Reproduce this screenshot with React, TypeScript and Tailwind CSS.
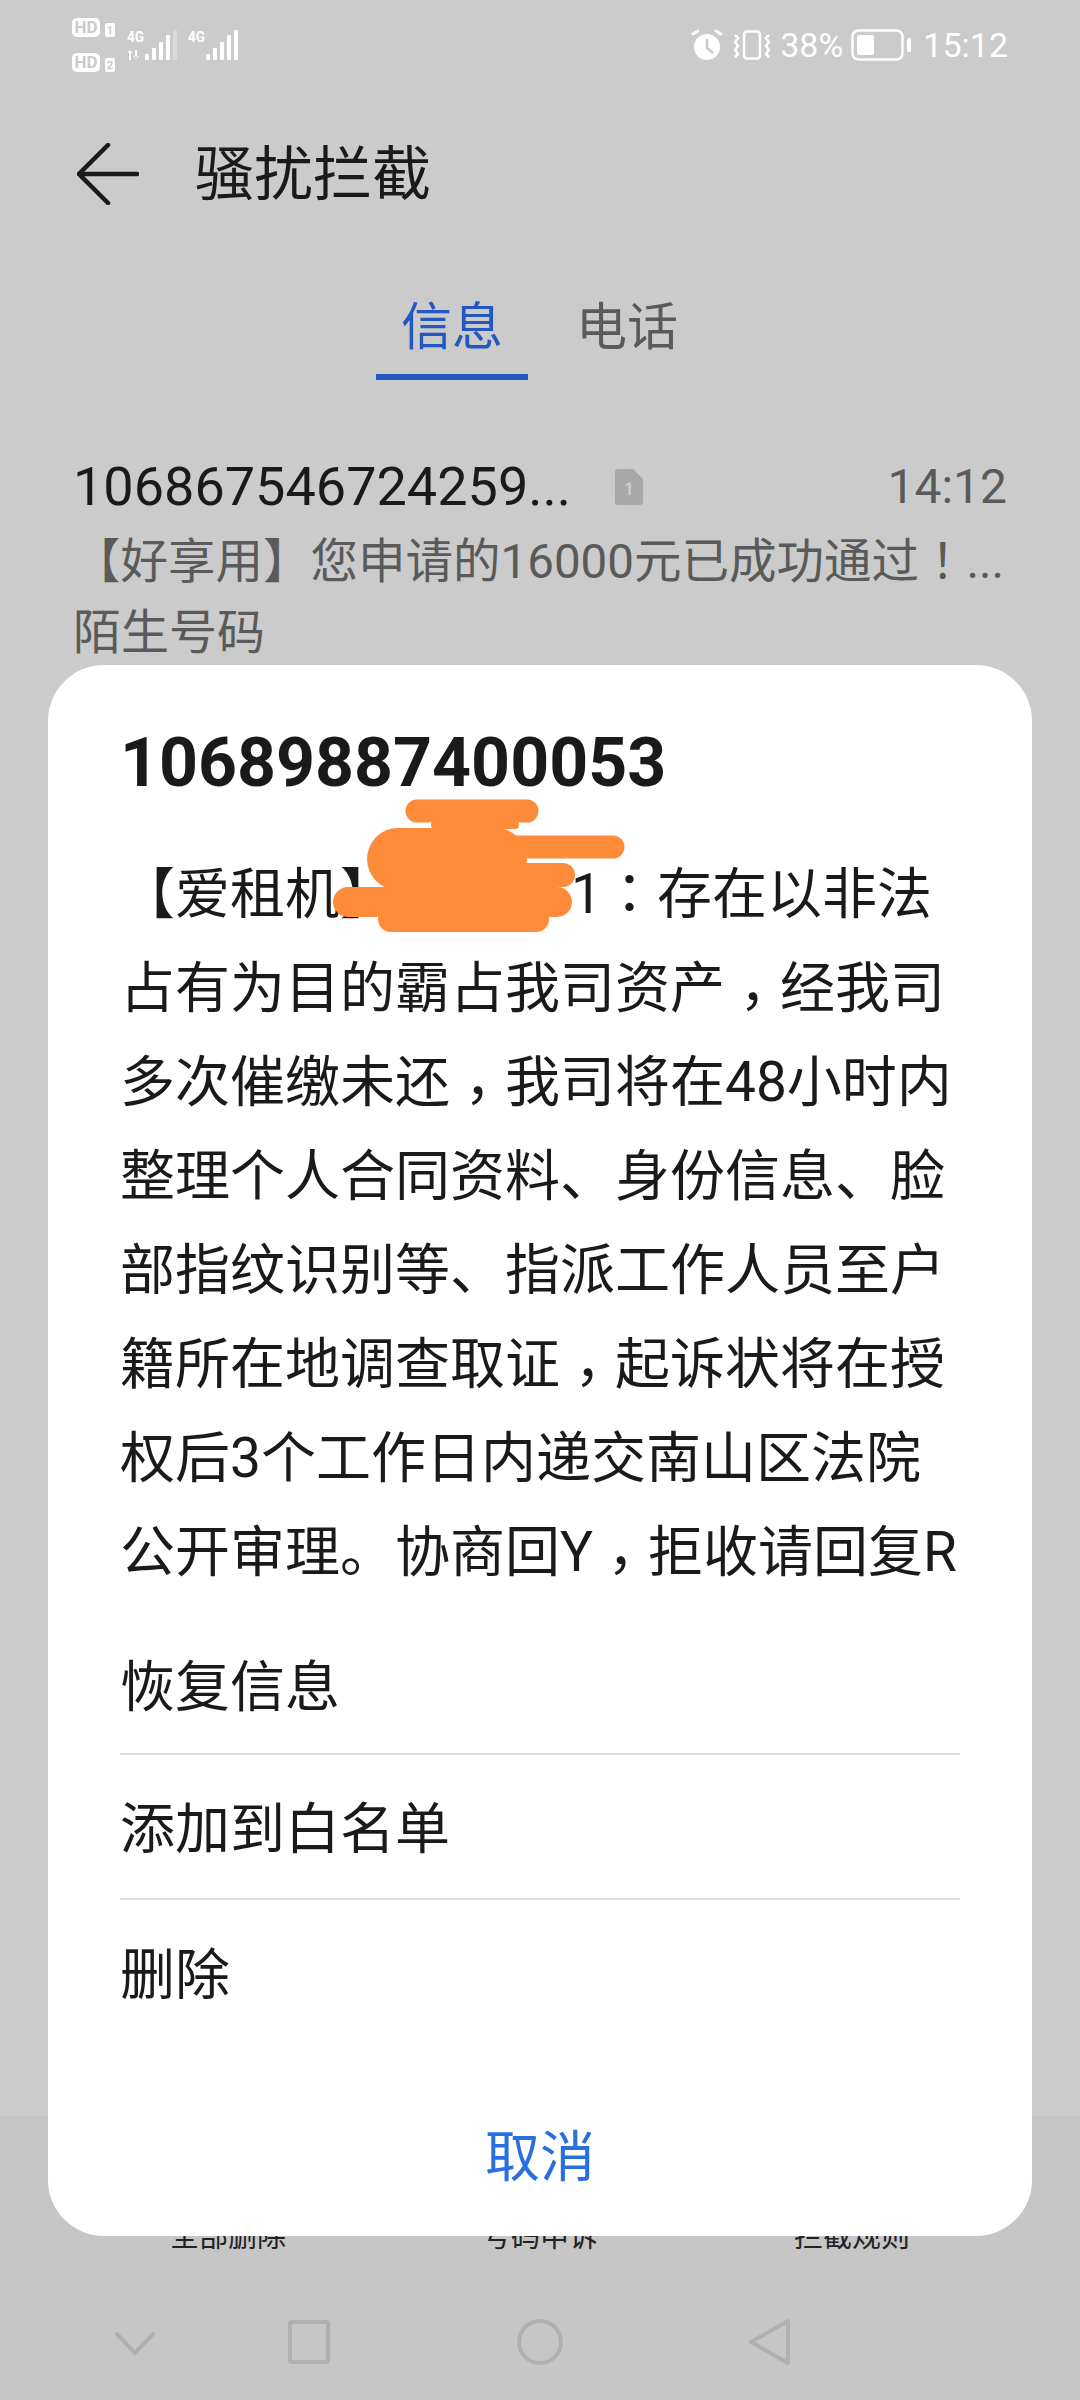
const cjk = "font-['Roboto','Noto_Sans_CJK_SC',sans-serif]";

// the phone's font centres full-width colons, the TC cut does too
function Mark({ children }: { children: string }) {
  return <span className="font-['Noto_Sans_CJK_TC',sans-serif] leading-none">{children}</span>;
}

// full-width comma sits low but centred in its cell
function Comma() {
  return <span className="inline-block translate-y-[14px] font-['Noto_Sans_CJK_TC',sans-serif] leading-none">，</span>;
}

const bodyLines = [
  <>占有为目的霸占我司资产<Comma />经我司</>,
  <>多次催缴未还<Comma />我司将在48小时内</>,
  <>整理个人合同资料、身份信息、脸</>,
  <>部指纹识别等、指派工作人员至户</>,
  <>籍所在地调查取证<Comma />起诉状将在授</>,
  <>权后3个工作日内递交南山区法院</>,
  <>公开审理。协商回Y<Comma />拒收请回复R</>,
];

function HdBadge({ n }: { n: number }) {
  return (
    <div className="flex items-end gap-[5px]">
      <span className="flex h-[19px] w-[28px] items-center justify-center rounded-[5px] bg-white font-['Roboto',sans-serif] text-[17px] leading-none font-bold text-[#cbcbcb]">
        HD
      </span>
      <span className="flex h-[14px] w-[10px] items-center justify-center rounded-[2px] bg-white font-['Roboto',sans-serif] text-[11px] leading-none font-bold text-[#cbcbcb]">
        {n}
      </span>
    </div>
  );
}

function Signal({ arrows, faint }: { arrows?: boolean; faint?: boolean }) {
  return (
    <svg width="50" height="32" viewBox="0 0 50 32" fill="#ffffff">
      <text x="0" y="13" fontFamily="Roboto" fontWeight="700" fontSize="15" textLength="17" lengthAdjust="spacingAndGlyphs">
        4G
      </text>
      {arrows && <path d="M2 22h2v9H2zM0 24l3-3 3 3zM8 21h2v9H8zM6 27l3 3 3-3z" />}
      <rect x="18" y="25" width="4" height="6" rx="1" />
      <rect x="25" y="19" width="4" height="12" rx="1" />
      <rect x="32" y="13" width="4" height="18" rx="1" />
      <rect x="39" y="6" width="4" height="25" rx="1" />
      <rect x="46" y="1" width="4" height="30" rx="1" opacity={faint ? 0.3 : 1} />
    </svg>
  );
}

function ToolbarLabel({ children }: { children: string }) {
  return <span className="w-[312px] text-center text-[29px] leading-[29px] text-[#222222]">{children}</span>;
}

export default function App() {
  return (
    <div className={`relative flex h-[2400px] w-[1080px] flex-col overflow-hidden bg-[#cbcbcb] ${cjk}`}>
      {/* status bar */}
      <div className="flex h-[90px] items-center justify-between pr-[72px] pl-[72px]">
        <div className="flex items-center gap-[12px]">
          <div className="flex flex-col gap-[16px]">
            <HdBadge n={1} />
            <HdBadge n={2} />
          </div>
          <div className="flex items-center gap-[11px]">
            <Signal arrows faint />
            <Signal />
          </div>
        </div>
        <div className="flex items-center text-white">
          <svg width="32" height="32" viewBox="0 0 32 32" fill="#ffffff">
            <circle cx="16" cy="18" r="13" />
            <path d="M16 10v9l6 5" fill="none" stroke="#cbcbcb" strokeWidth="2.5" />
            <path d="M2 5l5-3M30 5l-5-3" fill="none" stroke="#ffffff" strokeWidth="3" strokeLinecap="round" />
          </svg>
          <svg className="ml-[10px]" width="38" height="30" viewBox="0 0 38 30" fill="none" stroke="#ffffff">
            <rect x="11" y="1.5" width="16" height="27" rx="3" strokeWidth="2.5" />
            <path d="M2 5l3 3-3 4 3 4-3 4 3 4-3 3M36 5l-3 3 3 4-3 4 3 4-3 4 3 3" strokeWidth="2.5" />
          </svg>
          <span className="ml-[9px] text-[34px] leading-none">38%</span>
          <svg className="ml-[8px]" width="60" height="32" viewBox="0 0 60 32">
            <rect x="1.5" y="1.5" width="50" height="29" rx="6" fill="none" stroke="#ffffff" strokeWidth="2.5" />
            <rect x="6" y="6" width="17" height="20" rx="2" fill="#ffffff" />
            <rect x="56" y="9" width="4" height="14" rx="1.5" fill="#ffffff" />
          </svg>
          <span className="ml-[12px] text-[34px] leading-none">15:12</span>
        </div>
      </div>

      {/* header */}
      <div className="mt-[39px] flex h-[90px] items-center pl-[77px]">
        <svg width="62" height="62" viewBox="0 0 62 62" fill="none" stroke="#1a1a1a" strokeWidth="4.5" strokeLinecap="round">
          <path d="M31 2L2 31l29 29M2 31h58" />
        </svg>
        <span className="ml-[56px] text-[59px] leading-none text-[#1a1a1a]">骚扰拦截</span>
      </div>

      {/* tabs */}
      <div className="mt-[77px] flex pl-[376px]">
        <div className="flex w-[152px] flex-col items-center">
          <span className="text-[51px] leading-[64px] text-[#2358c0]">信息</span>
          <div className="mt-[14px] h-[6px] w-full bg-[#2358c0]" />
        </div>
        <span className="ml-[48px] text-[51px] leading-[64px] text-[#5a5a5a]">电话</span>
      </div>

      {/* list item */}
      <div className="mt-[77px] flex flex-col px-[73px]">
        <div className="flex h-[60px] items-center">
          <span className="w-[540px] text-[54px] leading-none text-[#1a1a1a]">106867546724259...</span>
          <svg className="ml-[2px]" width="28" height="36" viewBox="0 0 28 36">
            <path d="M3 0h15l10 10v23a3 3 0 0 1-3 3H3a3 3 0 0 1-3-3V3a3 3 0 0 1 3-3z" fill="#a8a8a8" />
            <text x="14" y="26" textAnchor="middle" fontFamily="Roboto" fontWeight="700" fontSize="18" fill="#cbcbcb">1</text>
          </svg>
          <span className="ml-auto text-[48px] leading-none text-[#5a5a5a]">14:12</span>
        </div>
        <span className="mt-[15px] whitespace-nowrap text-[47.5px] leading-[60px] text-[#5a5a5a]">
          【好享用】您申请的16000元已成功通过<Mark>！</Mark>...
        </span>
        <span className="mt-[11px] text-[48px] leading-[60px] text-[#5a5a5a]">陌生号码</span>
      </div>

      {/* bottom toolbar */}
      <div className="absolute inset-x-0 bottom-0 flex h-[284px] flex-col bg-[#c6c6c6]">
        <div className="mt-[107px] flex justify-center">
          <ToolbarLabel>全部删除</ToolbarLabel>
          <ToolbarLabel>号码申诉</ToolbarLabel>
          <ToolbarLabel>拦截规则</ToolbarLabel>
        </div>
        <div className="relative flex-1">
          <svg className="absolute top-0 left-0" width="1080" height="148" viewBox="0 0 1080 148" fill="none" stroke="#b0b0b0" strokeWidth="4" strokeLinejoin="round" strokeLinecap="round">
            <path d="M117 82l18 19 18-19" />
            <rect x="290" y="70" width="38" height="40" rx="2" />
            <circle cx="540" cy="90" r="21" />
            <path d="M788 69v42l-37-21z" />
          </svg>
        </div>
      </div>

      {/* action dialog */}
      <div className="absolute top-[665px] left-[48px] flex h-[1571px] w-[984px] flex-col rounded-[56px] bg-white pl-[72px] pr-[72px]">
        <h2 className="mt-[58px] text-[68px] leading-[80px] font-bold text-[#1a1a1a]">10689887400053</h2>
        <div className="mt-[44px] text-[55px] leading-[94px] whitespace-nowrap text-[#1a1a1a]">
          <div>
            【爱租机】
            <span className="inline-block w-[176px]" />
            1<Mark>：</Mark>存在以非法
          </div>
          {bodyLines.map((line, i) => (
            <div key={i}>{line}</div>
          ))}
        </div>
        <div className="mt-[41px] flex flex-col text-[55px] text-[#1a1a1a]">
          <div className="flex h-[115px] items-center border-b-2 border-[#dddddd] pb-[18px]">恢复信息</div>
          <div className="flex h-[145px] items-center border-b-2 border-[#dddddd] pt-[6px]">添加到白名单</div>
          <div className="flex h-[145px] items-center pt-[6px]">删除</div>
        </div>
        <div className="mt-[80px] text-center text-[55px] leading-[64px] text-[#2a6fe0]">取消</div>
      </div>

      {/* redaction scribble */}
      <svg className="absolute top-[795px] left-[325px]" width="310" height="145" viewBox="0 0 310 145" fill="none" stroke="#fe8b39" strokeLinecap="round" strokeLinejoin="round">
        <path d="M92 16h110" strokeWidth="23" />
        <path d="M110 30h80" strokeWidth="8" />
        <path d="M73 64h98" strokeWidth="62" />
        <path d="M190 52h98" strokeWidth="23" />
        <path d="M150 80h88" strokeWidth="24" />
        <path d="M23 107h209" strokeWidth="30" />
        <path d="M66 124h145" strokeWidth="26" />
      </svg>
    </div>
  );
}
